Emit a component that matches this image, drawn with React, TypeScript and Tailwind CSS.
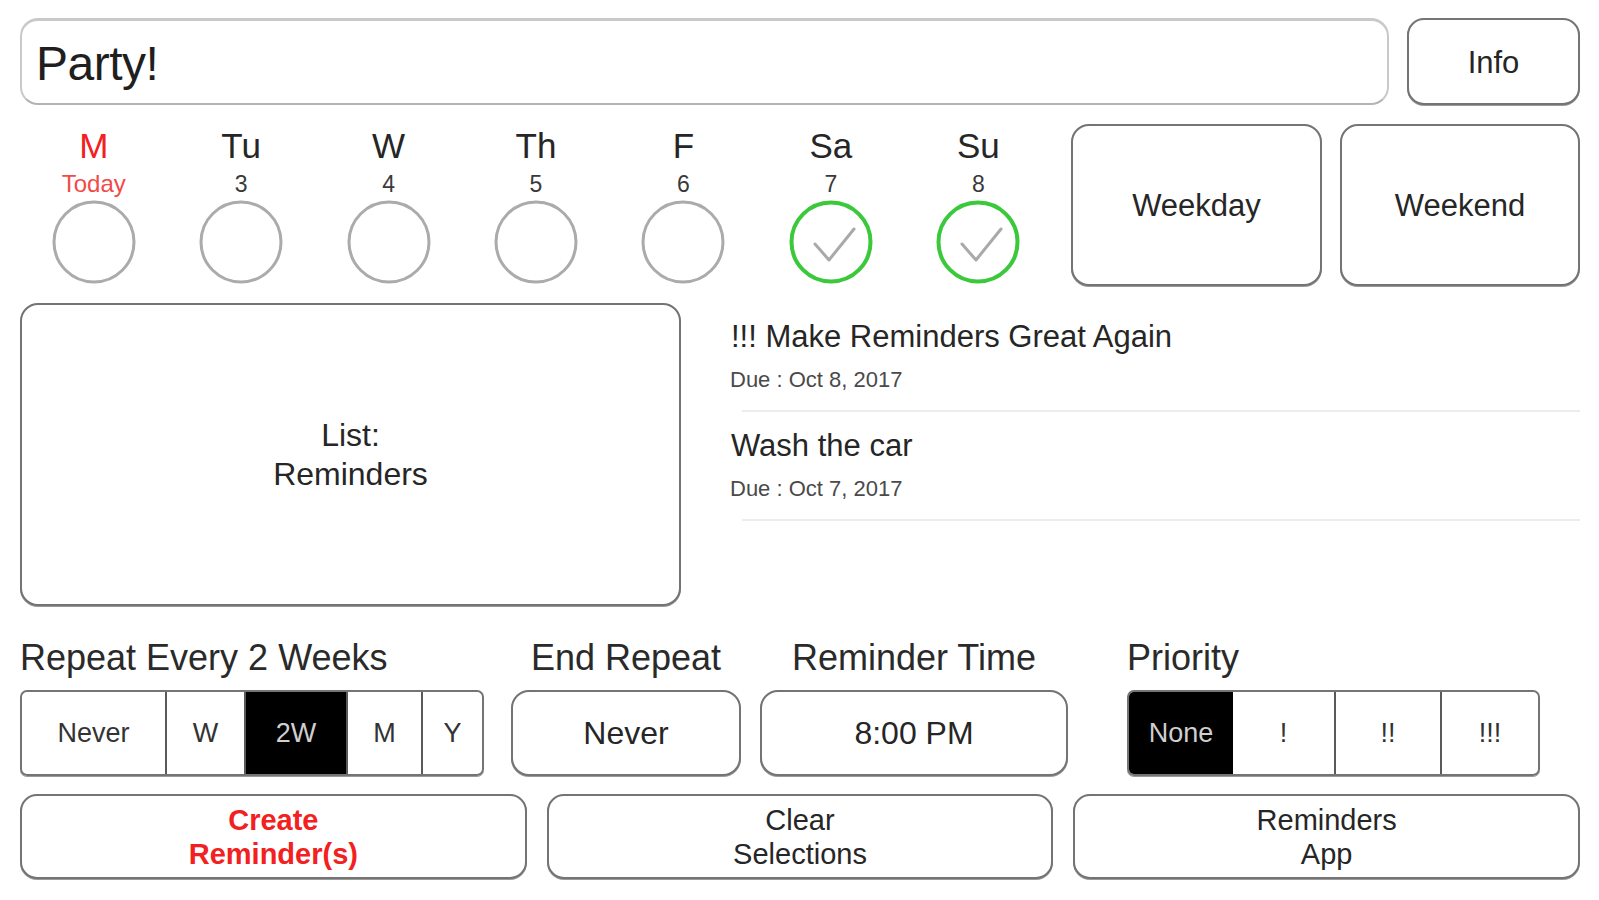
import React from 'react';

// ---------------------------------------------------------------------------
// DATA
// ---------------------------------------------------------------------------

interface Day {
  label: string;
  sub: string;
  today?: boolean;
  checked?: boolean;
}

const days: Day[] = [
  { label: 'M', sub: 'Today', today: true },
  { label: 'Tu', sub: '3' },
  { label: 'W', sub: '4' },
  { label: 'Th', sub: '5' },
  { label: 'F', sub: '6' },
  { label: 'Sa', sub: '7', checked: true },
  { label: 'Su', sub: '8', checked: true },
];

const reminders = [
  { title: '!!! Make Reminders Great Again', due: 'Due : Oct 8, 2017' },
  { title: 'Wash the car', due: 'Due : Oct 7, 2017' },
];

const repeatOptions = [
  { label: 'Never', w: 'w-[143px]' },
  { label: 'W', w: 'w-[79px]' },
  { label: '2W', w: 'w-[102px]', active: true },
  { label: 'M', w: 'w-[75px]' },
  { label: 'Y', w: 'flex-1' },
];

const priorityOptions = [
  { label: 'None', w: 'w-[104px]', active: true },
  { label: '!', w: 'w-[101px]' },
  { label: '!!', w: 'w-[106px]' },
  { label: '!!!', w: 'flex-1' },
];

// ---------------------------------------------------------------------------
// PIECES
// ---------------------------------------------------------------------------

const DayCircle: React.FC<{ checked?: boolean }> = ({ checked }) => (
  <svg width="86" height="86" viewBox="0 0 86 86">
    {checked ? (
      <>
        <circle cx="43" cy="42" r="39.5" fill="none" stroke="#3bc83b" strokeWidth="4" />
        <path d="M27 44 L41 60 L66 29" fill="none" stroke="#a9a9a9" strokeWidth="3" strokeLinecap="round" strokeLinejoin="round" />
      </>
    ) : (
      <circle cx="43" cy="42" r="40" fill="none" stroke="#ababab" strokeWidth="3" />
    )}
  </svg>
);

const OutlineButton: React.FC<{ className?: string; children: React.ReactNode }> = ({ className = '', children }) => (
  <div
    className={`flex items-center justify-center text-center border-2 border-[#747474] shadow-[0_1px_0_#9a9a9a] bg-white text-[#262626] ${className}`}
  >
    {children}
  </div>
);

// ---------------------------------------------------------------------------
// APP
// ---------------------------------------------------------------------------

export default function App() {
  return (
    <div className="w-[1599px] h-[900px] bg-white overflow-hidden pl-[20px] pr-[19px] pt-[18px] font-['Liberation_Sans',Arial,sans-serif] text-[#262626]">
      {/* Title row */}
      <div className="flex h-[87px] gap-[18px]">
        <div className="flex-1 flex items-center rounded-[18px] border-2 border-t-[3px] border-[#c9c9c9] border-b-[#b3b3b3] pl-[14px]">
          <span className="text-[48px] leading-none tracking-[-0.5px] text-[#1f1f1f] pt-[3px]">Party!</span>
        </div>
        <OutlineButton className="w-[173px] rounded-[17px] text-[31px] pt-[4px]">Info</OutlineButton>
      </div>

      {/* Days row */}
      <div className="flex mt-[19px] h-[162px]">
        <div className="grid grid-cols-7 w-[1032px]">
          {days.map((d) => (
            <div key={d.label} className="flex flex-col items-center">
              <div className={`h-[44px] flex items-center text-[35px] ${d.today ? 'text-[#f2201e]' : 'text-[#262626]'}`}>
                {d.label}
              </div>
              <div className={`h-[32px] flex items-center ${d.today ? 'text-[24px] text-[#f24a48]' : 'text-[23px] text-[#3a3a3a]'}`}>
                {d.sub}
              </div>
              <DayCircle checked={d.checked} />
            </div>
          ))}
        </div>
        <OutlineButton className="ml-[19px] w-[251px] rounded-[18px] text-[31px] pt-[2px]">Weekday</OutlineButton>
        <OutlineButton className="ml-[18px] flex-1 rounded-[18px] text-[31px] pt-[2px]">Weekend</OutlineButton>
      </div>

      {/* List + reminders */}
      <div className="flex mt-[17px] h-[303px]">
        <OutlineButton className="w-[661px] rounded-[18px] text-[32px] leading-[39px]">
          <div>
            List:
            <br />
            Reminders
          </div>
        </OutlineButton>
        <div className="ml-[49px] flex-1 flex flex-col">
          {reminders.map((r) => (
            <div key={r.title} className="flex flex-col">
              <div className="pl-[1px] pt-[14px] h-[54px] flex items-center text-[31px] text-[#262626]">{r.title}</div>
              <div className="mt-[8px] h-[28px] flex items-center text-[22px] text-[#4a4a4a]">{r.due}</div>
              <div className="mt-[17px] ml-[12px] h-[2px] bg-[#ececec]" />
            </div>
          ))}
        </div>
      </div>

      {/* Settings row */}
      <div className="flex mt-[31px]">
        <div className="w-[464px] flex flex-col">
          <div className="h-[42px] flex items-center text-[36px] text-[#2a2a2a] whitespace-nowrap">Repeat Every 2 Weeks</div>
          <div className="mt-[11px] h-[86px] flex rounded-[7px] border-2 border-[#747474] overflow-hidden shadow-[0_1px_0_#9a9a9a]">
            {repeatOptions.map((o, i) => (
              <div
                key={o.label}
                className={`${o.w} flex items-center justify-center text-[27px] ${i > 0 ? 'border-l-2 border-[#5a5a5a]' : ''} ${
                  o.active ? 'bg-black text-[#cfcfcf]' : 'text-[#333]'
                }`}
              >
                {o.label}
              </div>
            ))}
          </div>
        </div>

        <div className="ml-[27px] w-[230px] flex flex-col">
          <div className="h-[42px] flex items-center justify-center text-[36px] text-[#2a2a2a] whitespace-nowrap">End Repeat</div>
          <OutlineButton className="mt-[11px] h-[86px] rounded-[18px] text-[32px]">Never</OutlineButton>
        </div>

        <div className="ml-[19px] w-[308px] flex flex-col">
          <div className="h-[42px] flex items-center justify-center text-[36px] text-[#2a2a2a] whitespace-nowrap">Reminder Time</div>
          <OutlineButton className="mt-[11px] h-[86px] rounded-[18px] text-[32px]">8:00 PM</OutlineButton>
        </div>

        <div className="ml-[59px] w-[413px] flex flex-col">
          <div className="h-[42px] flex items-center text-[36px] text-[#2a2a2a]">Priority</div>
          <div className="mt-[11px] h-[86px] flex rounded-[7px] border-2 border-[#747474] overflow-hidden shadow-[0_1px_0_#9a9a9a]">
            {priorityOptions.map((o, i) => (
              <div
                key={o.label}
                className={`${o.w} flex items-center justify-center text-[27px] ${i > 1 ? 'border-l-2 border-[#5a5a5a]' : ''} ${
                  o.active ? 'bg-black text-[#cfcfcf]' : 'text-[#333]'
                }`}
              >
                {o.label}
              </div>
            ))}
          </div>
        </div>
      </div>

      {/* Action row */}
      <div className="flex gap-[20px] mt-[18px] h-[85px]">
        <OutlineButton className="flex-1 rounded-[17px] text-[29px] leading-[34px] font-bold">
          <div className="text-[#f2201e]">
            Create
            <br />
            Reminder(s)
          </div>
        </OutlineButton>
        <OutlineButton className="flex-1 rounded-[17px] text-[29px] leading-[34px]">
          <div>
            Clear
            <br />
            Selections
          </div>
        </OutlineButton>
        <OutlineButton className="flex-1 rounded-[17px] text-[29px] leading-[34px]">
          <div>
            Reminders
            <br />
            App
          </div>
        </OutlineButton>
      </div>
    </div>
  );
}
